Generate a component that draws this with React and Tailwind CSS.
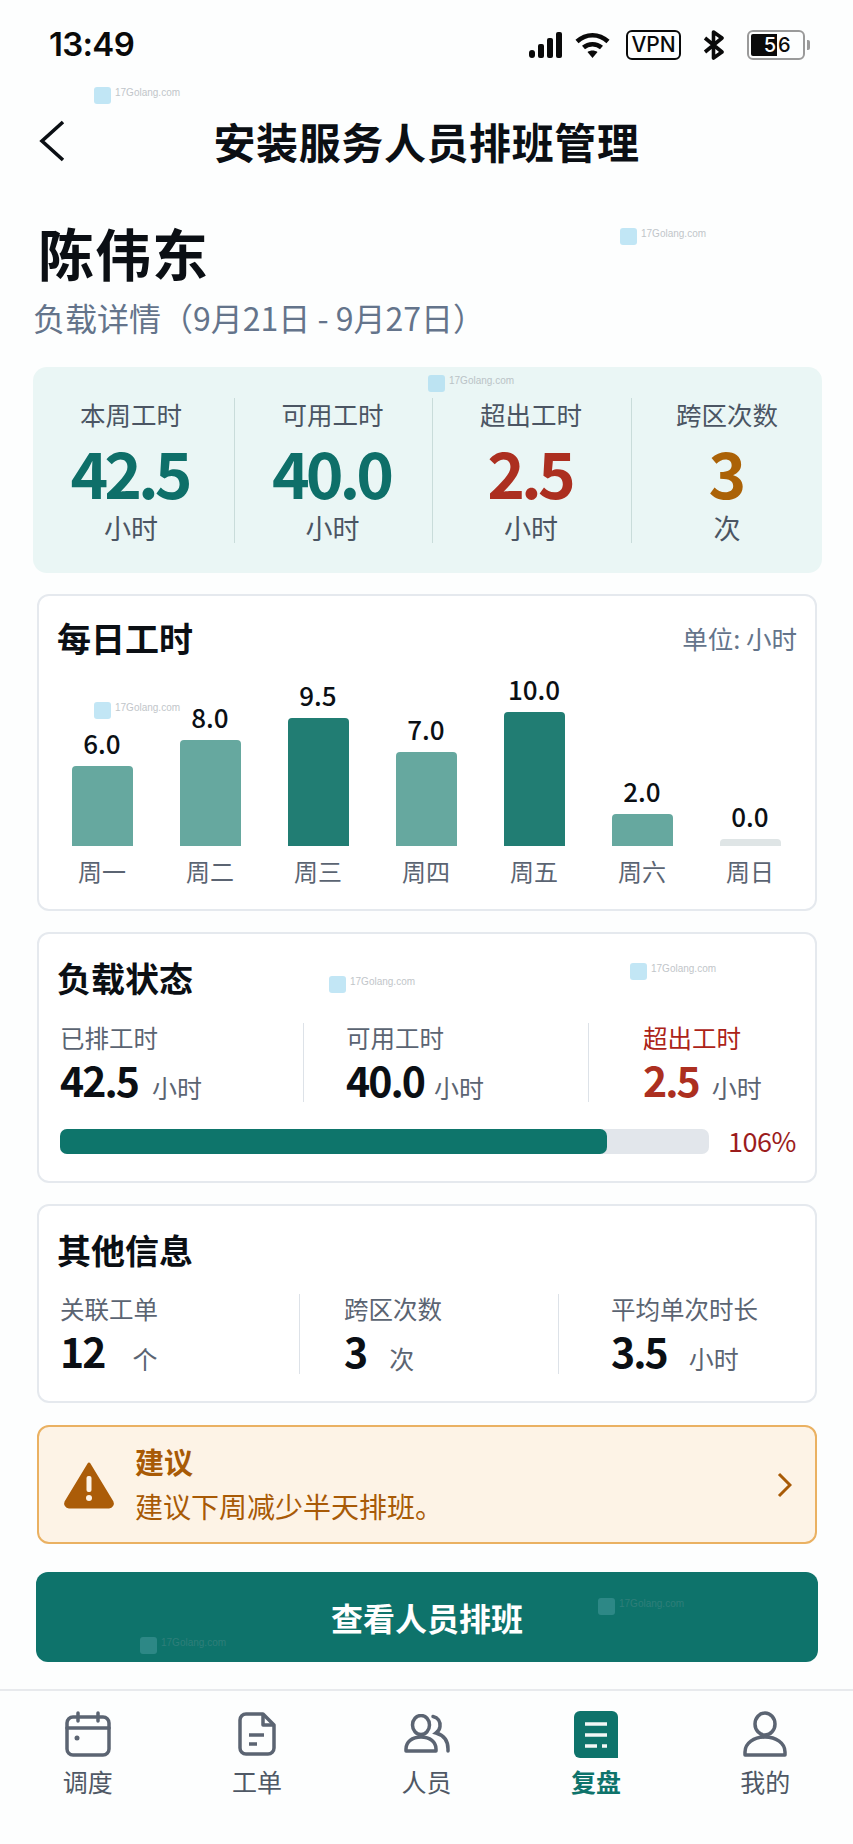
const cjk = "font-['Noto_Sans_CJK_SC','Noto_Sans',sans-serif]"

function Watermark({ className }) {
  return (
    <div className={`absolute flex items-start gap-[4px] ${className}`}>
      <div className="w-[17px] h-[17px] rounded-[3px] bg-[#a9dcf2]" />
      <span className="text-[10px] leading-[12px] text-[#a7adb3] font-['Liberation_Sans',sans-serif]">17Golang.com</span>
    </div>
  )
}

function StatusIcons() {
  return (
    <div className="flex items-center">
      <svg width="33" height="26" viewBox="0 0 33 26" fill="#0a0a0a">
        <rect x="0" y="18" width="6" height="8" rx="3" />
        <rect x="9" y="12" width="6" height="14" rx="2" />
        <rect x="18" y="6" width="6" height="20" rx="2" />
        <rect x="27" y="0" width="6" height="26" rx="2" />
      </svg>
      <svg className="ml-[13px]" width="35" height="26" viewBox="0 0 35 26" fill="none" stroke="#0a0a0a" strokeWidth="4.5">
        <path d="M2 9.5C11 1 24 1 33 9.5" />
        <path d="M8.5 15.5c5-4.400 13-4.400 18 0" />
        <path d="M17.5 26l-5-6c3-2 7-2 10 0z" fill="#0a0a0a" stroke="none" />
      </svg>
      <div className="ml-[16px] w-[55px] h-[30px] border-2 border-[#0a0a0a] rounded-[6px] flex items-center justify-center text-[21px] font-medium text-[#0a0a0a] font-['Inter',sans-serif]">VPN</div>
      <svg className="ml-[22px]" width="21" height="30" viewBox="0 0 21 30" fill="none" stroke="#0a0a0a" strokeWidth="3.6" strokeLinejoin="round">
        <path d="M2 8l17 14-8.500 6V2L19 8 2 22" />
      </svg>
      <div className="ml-[23px] flex items-center">
        <div className="w-[58px] h-[30px] border-2 border-[#9a9a9a] rounded-[6px] p-[2px] flex items-stretch">
          <div className="w-[26px] bg-[#0a0a0a] rounded-l-[2px] flex items-center justify-end pr-[1px] text-white text-[20px] font-medium font-['Inter',sans-serif]">5</div>
          <div className="pl-[1px] flex items-center text-[#0a0a0a] text-[20px] font-medium font-['Inter',sans-serif]">6</div>
        </div>
        <div className="ml-[2px] w-[3px] h-[10px] bg-[#9a9a9a] rounded-r-[2px]" />
      </div>
    </div>
  )
}

function SummaryCell({ label, value, unit, color, divider, pad }) {
  return (
    <div className={`flex flex-col items-center h-[145px] ${pad} ${divider ? 'border-l border-[#c9dcda]' : ''}`}>
      <div className="text-[25.500px] leading-[32px] text-[#4b5563]">{label}</div>
      <div className={`mt-[9px] pr-[3px] text-[64px] leading-[64px] font-bold tracking-[-4px] ${color}`}>{value}</div>
      <div className="mt-[9px] text-[27px] leading-[32px] text-[#4b5563]">{unit}</div>
    </div>
  )
}

function Bar({ value, day, height, color }) {
  return (
    <div className="w-[108px] shrink-0 flex flex-col items-center">
      <div className="h-[178px] flex flex-col items-center justify-end">
        <div className="text-[26px] leading-[32px] font-medium text-[#0b0f14] mb-[7px]">{value}</div>
        <div className={`w-[61px] rounded-t-[4px] ${height} ${color}`} />
      </div>
      <div className="mt-[9px] text-[24px] leading-[32px] text-[#5b6472]">{day}</div>
    </div>
  )
}

function Stat({ label, value, unit, gap, className, labelColor = 'text-[#5b6472]', valueColor = 'text-[#0b0f14]' }) {
  return (
    <div className={className}>
      <div className={`text-[24.500px] leading-[30px] ${labelColor}`}>{label}</div>
      <div className={`flex items-end ${gap}`}>
        <span className={`text-[41px] leading-[52px] font-bold tracking-[-2px] ${valueColor}`}>{value}</span>
        <span className="text-[25px] leading-[36px] text-[#5b6472]">{unit}</span>
      </div>
    </div>
  )
}

function Tab({ label, active, children }) {
  return (
    <div className="flex-1 flex flex-col items-center">
      <div className="h-[48px] flex items-center justify-center">{children}</div>
      <div className={`mt-[7px] text-[25px] leading-[32px] ${active ? 'text-[#0e736b] font-semibold' : 'text-[#4f5865]'}`}>{label}</div>
    </div>
  )
}

export default function App() {
  return (
    <div className={`relative w-[853px] h-[1844px] bg-[#fdfefe] overflow-hidden flex flex-col ${cjk}`}>
      {/* 状态栏 */}
      <div className="h-[90px] flex items-center justify-between pl-[49px] pr-[43px] shrink-0">
        <span className="text-[33px] font-semibold text-[#0a0a0a] font-['Inter',sans-serif] tracking-[-0.7px]">13:49</span>
        <StatusIcons />
      </div>

      {/* 标题栏 */}
      <div className="relative h-[102px] flex items-center justify-center shrink-0">
        <svg className="absolute left-[39px] top-[30px]" width="26" height="42" viewBox="0 0 26 42" fill="none" stroke="#0b0f14" strokeWidth="3.6">
          <path d="M24 2L3 21l21 19" />
        </svg>
        <h1 className="text-[42px] leading-[56px] font-bold tracking-[0.6px] text-[#0b0f14]">安装服务人员排班管理</h1>
      </div>

      {/* 姓名 */}
      <div className="pl-[38px] mt-[26px] text-[56px] leading-[68px] font-bold text-[#0b0f14] tracking-[1px]">陈伟东</div>
      <div className="pl-[33px] mt-[9px] text-[32px] leading-[44px] text-[#64748b]">负载详情（9月21日 - 9月27日）</div>

      {/* 汇总 */}
      <div className="ml-[33px] mt-[28px] w-[789px] h-[206px] bg-[#eaf6f5] rounded-[14px] pt-[31px] grid grid-cols-[201px_198px_199px_191px]">
        <SummaryCell label="本周工时" value="42.5" unit="小时" color="text-[#0e6f69]" pad="pr-[5px]" />
        <SummaryCell label="可用工时" value="40.0" unit="小时" color="text-[#0e6f69]" divider pad="pr-[2px]" />
        <SummaryCell label="超出工时" value="2.5" unit="小时" color="text-[#ac2f20]" divider pad="pr-[2px]" />
        <SummaryCell label="跨区次数" value="3" unit="次" color="text-[#ab6207]" divider />
      </div>

      {/* 每日工时 */}
      <div className="ml-[37px] mt-[21px] w-[780px] h-[317px] bg-white border-2 border-[#e5e9ee] rounded-[12px] px-[18px] pt-[18px]">
        <div className="flex items-center justify-between">
          <div className="text-[34px] leading-[48px] font-bold text-[#0b0f14]">每日工时</div>
          <div className="text-[25.500px] leading-[48px] text-[#64748b]">单位: 小时</div>
        </div>
        <div className="flex -ml-[9px] mt-[6px]">
          <Bar value="6.0" day="周一" height="h-[80px]" color="bg-[#66a89f]" />
          <Bar value="8.0" day="周二" height="h-[106px]" color="bg-[#66a89f]" />
          <Bar value="9.5" day="周三" height="h-[128px]" color="bg-[#217d73]" />
          <Bar value="7.0" day="周四" height="h-[94px]" color="bg-[#66a89f]" />
          <Bar value="10.0" day="周五" height="h-[134px]" color="bg-[#217d73]" />
          <Bar value="2.0" day="周六" height="h-[32px]" color="bg-[#66a89f]" />
          <Bar value="0.0" day="周日" height="h-[7px]" color="bg-[#dfe5e6]" />
        </div>
      </div>

      {/* 负载状态 */}
      <div className="ml-[37px] mt-[21px] w-[780px] h-[251px] bg-white border-2 border-[#e5e9ee] rounded-[12px] px-[21px] pt-[20px]">
        <div className="text-[34px] leading-[48px] font-bold text-[#0b0f14] -ml-[3px]">负载状态</div>
        <div className="flex mt-[21px] h-[79px]">
          <Stat className="w-[243px]" label="已排工时" value="42.5" unit="小时" gap="gap-[14px]" />
          <Stat className="w-[285px] border-l border-[#dde2e8] pl-[42px]" label="可用工时" value="40.0" unit="小时" gap="gap-[10px]" />
          <Stat className="border-l border-[#dde2e8] pl-[54px]" label="超出工时" value="2.5" unit="小时" gap="gap-[13px]" labelColor="text-[#ac2318]" valueColor="text-[#ac2f20]" />
        </div>
        <div className="flex items-center mt-[23px]">
          <div className="w-[649px] h-[25px] shrink-0 rounded-[7px] bg-[#e2e6eb]">
            <div className="w-[547px] h-full rounded-[7px] bg-[#0e756b]" />
          </div>
          <div className="ml-[19px] text-[27px] leading-[32px] tracking-[-0.5px] text-[#9b1c1c]">106%</div>
        </div>
      </div>

      {/* 其他信息 */}
      <div className="ml-[37px] mt-[21px] w-[780px] h-[199px] bg-white border-2 border-[#e5e9ee] rounded-[12px] px-[21px] pt-[20px]">
        <div className="text-[34px] leading-[48px] font-bold text-[#0b0f14] -ml-[3px]">其他信息</div>
        <div className="flex mt-[20px] h-[80px]">
          <Stat className="w-[239px]" label="关联工单" value="12" unit="个" gap="gap-[28px]" />
          <Stat className="w-[259px] border-l border-[#dde2e8] pl-[44px]" label="跨区次数" value="3" unit="次" gap="gap-[23px]" />
          <Stat className="border-l border-[#dde2e8] pl-[52px]" label="平均单次时长" value="3.5" unit="小时" gap="gap-[22px]" />
        </div>
      </div>

      {/* 建议 */}
      <div className="ml-[37px] mt-[22px] w-[780px] h-[119px] bg-[#fdf3e6] border-2 border-[#eab162] rounded-[12px] flex items-center pl-[24px] pr-[23px]">
        <svg width="52" height="48" viewBox="0 0 52 48" className="shrink-0">
          <path d="M26 3L49 41a3.500 3.500 0 0 1-3 5H6a3.500 3.500 0 0 1-3-5z" fill="#ab5c08" stroke="#ab5c08" strokeWidth="3" strokeLinejoin="round" />
          <rect x="23.500" y="15" width="5" height="16" rx="2" fill="#fdf3e6" />
          <circle cx="26" cy="37" r="3" fill="#fdf3e6" />
        </svg>
        <div className="ml-[20px] flex-1 pb-[3px]">
          <div className="text-[29px] leading-[40px] font-bold text-[#a85a06]">建议</div>
          <div className="mt-[5px] text-[28px] leading-[40px] text-[#a85a06]">建议下周减少半天排班。</div>
        </div>
        <svg width="15" height="26" viewBox="0 0 15 26" fill="none" stroke="#a85a06" strokeWidth="3">
          <path d="M2 2l11 11L2 24" />
        </svg>
      </div>

      {/* 按钮 */}
      <div className="ml-[36px] mt-[28px] w-[782px] h-[90px] bg-[#0e736b] rounded-[12px] flex items-center justify-center text-[32px] font-bold text-white">查看人员排班</div>

      {/* 底部导航 */}
      <div className="mt-[27px] border-t-2 border-[#e8eaed] flex px-[3px] pt-[19px]">
        <Tab label="调度">
          <svg width="46" height="46" viewBox="0 0 46 46" fill="none" stroke="#5b6472" strokeWidth="3.500" strokeLinecap="round">
            <rect x="2" y="6" width="42" height="38" rx="6" />
            <path d="M2 17h42M13 2v8M33 2v8" />
            <circle cx="12" cy="27" r="2.500" fill="#5b6472" stroke="none" />
          </svg>
        </Tab>
        <Tab label="工单">
          <svg width="38" height="44" viewBox="0 0 38 44" fill="none" stroke="#5b6472" strokeWidth="3.500" strokeLinejoin="round">
            <path d="M8 2h17l11 11v23a6 6 0 0 1-6 6H8a6 6 0 0 1-6-6V8a6 6 0 0 1 6-6z" />
            <path d="M25 2v11h11" />
            <path d="M11 23h15M11 32h8" />
          </svg>
        </Tab>
        <Tab label="人员">
          <svg width="46" height="40" viewBox="0 0 46 40" fill="none" stroke="#5b6472" strokeWidth="3.500" strokeLinecap="round">
            <ellipse cx="17" cy="11" rx="8.500" ry="9.500" />
            <path d="M2 37v-2c0-7 6-12 15-12s15 5 15 12v2z" strokeLinejoin="round" />
            <path d="M29 2.500c5 1 7.500 5 7 10-.3 3-2 5-4 6.500 7 2 12 7 12 16v2" />
          </svg>
        </Tab>
        <Tab label="复盘" active>
          <svg width="44" height="47" viewBox="0 0 44 47">
            <path d="M6 0h32a6 6 0 0 1 6 6v41H6a6 6 0 0 1-6-6V6a6 6 0 0 1 6-6z" fill="#0e736b" />
            <path d="M11 13h22M11 24h22M11 35h12M28 35h5" stroke="#f2f7f6" strokeWidth="3.500" />
          </svg>
        </Tab>
        <Tab label="我的">
          <svg width="44" height="46" viewBox="0 0 44 46" fill="none" stroke="#5b6472" strokeWidth="3.500" strokeLinejoin="round">
            <ellipse cx="22" cy="13" rx="10" ry="11" />
            <path d="M2 44v-3c0-9 9-15 20-15s20 6 20 15v3z" />
          </svg>
        </Tab>
      </div>

      <Watermark className="opacity-70 left-[94px] top-[87px]" />
      <Watermark className="opacity-70 left-[620px] top-[228px]" />
      <Watermark className="opacity-70 left-[428px] top-[375px]" />
      <Watermark className="opacity-70 left-[94px] top-[702px]" />
      <Watermark className="opacity-70 left-[329px] top-[976px]" />
      <Watermark className="opacity-70 left-[630px] top-[963px]" />
      <Watermark className="opacity-20 left-[598px] top-[1598px]" />
      <Watermark className="opacity-20 left-[140px] top-[1637px]" />
    </div>
  )
}
